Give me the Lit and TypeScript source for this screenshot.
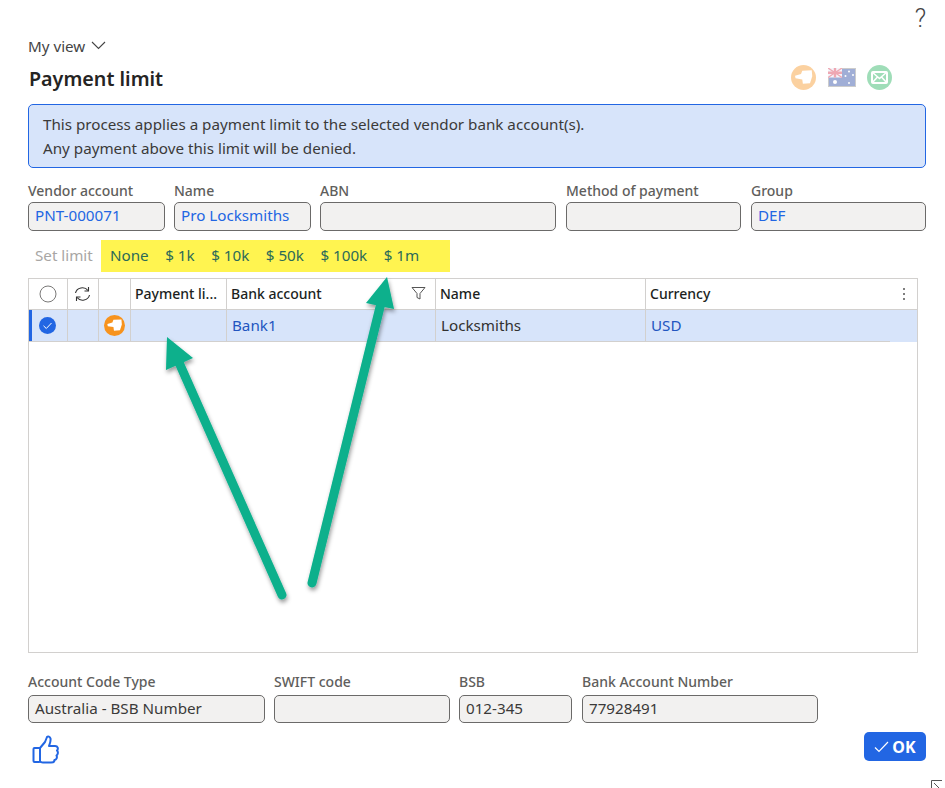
import { LitElement, html, css, svg } from 'lit';
import { customElement } from 'lit/decorators.js';

const topFields = [
  { label: 'Vendor account', value: 'PNT-000071', width: 137, gap: 0, link: true },
  { label: 'Name', value: 'Pro Locksmiths', width: 137, gap: 9, link: true },
  { label: 'ABN', value: '', width: 236, gap: 9 },
  { label: 'Method of payment', value: '', width: 175, gap: 10 },
  { label: 'Group', value: 'DEF', width: 175, gap: 10, link: true }
];

const bottomFields = [
  { label: 'Account Code Type', value: 'Australia - BSB Number', width: 237, gap: 0 },
  { label: 'SWIFT code', value: '', width: 176, gap: 9 },
  { label: 'BSB', value: '012-345', width: 113, gap: 9 },
  { label: 'Bank Account Number', value: '77928491', width: 236, gap: 10 }
];

const limits = ['None', '$ 1k', '$ 10k', '$ 50k', '$ 100k', '$ 1m'];

const handIcon = svg`
  <circle cx="10" cy="10" r="10" fill="#f7931e"></circle>
  <path d="M3.2 8.6 L8 7.2 L9 4.5 L16.6 4.2 L17 9 L15.2 14.5 L9.5 15 L9 11.5 L3.6 10.6 Z" fill="#fff"></path>`;

@customElement('app-root')
export class AppRoot extends LitElement {
  static styles = css`
    :host {
      display: block;
      position: relative;
      width: 945px;
      height: 788px;
      overflow: hidden;
      background: #fff;
      color: #323130;
      font-family: 'Noto Sans', 'Open Sans', sans-serif;
      font-size: 15.2px;
    }
    .page {
      display: flex;
      flex-direction: column;
      padding: 0 19px 0 28px;
    }
    .help {
      display: flex;
      justify-content: flex-end;
      height: 36px;
      font-family: Roboto, sans-serif;
      font-weight: 300;
      font-size: 25px;
      line-height: 37px;
      color: #444;
    }
    .view {
      display: flex;
      align-items: center;
      gap: 6px;
      height: 20px;
      color: #444;
    }
    .view svg {
      margin-bottom: 2px;
    }
    .title-row {
      display: flex;
      justify-content: space-between;
      align-items: center;
      box-sizing: border-box;
      height: 48px;
      padding-bottom: 4px;
    }
    h1 {
      margin: 0 0 0 1px;
      font-size: 19.7px;
      font-weight: 600;
      color: #252423;
    }
    .actions {
      display: flex;
      align-items: center;
      gap: 11px;
      margin-right: 34px;
      margin-bottom: 2px;
      opacity: 0.42;
    }
    .actions svg:first-child {
      margin-right: 1px;
    }
    .info {
      box-sizing: border-box;
      height: 64px;
      padding: 7px 14px;
      border: 1px solid #2266e3;
      border-radius: 5px;
      background: #d7e4fa;
      line-height: 24px;
      color: #3b3a39;
    }
    .fields {
      display: flex;
    }
    .top {
      margin-top: 14px;
    }
    .bottom {
      margin-top: 20px;
    }
    .label {
      height: 20px;
      line-height: 18px;
      font-size: 14px;
      font-weight: 500;
      color: #605e5c;
    }
    .bottom .label {
      height: 22px;
    }
    .input {
      box-sizing: border-box;
      height: 29px;
      padding: 0 6px;
      border: 1px solid #6b6a69;
      border-radius: 5px;
      background: #f2f1f0;
      line-height: 25px;
      color: #3b3a39;
      white-space: nowrap;
    }
    .bottom .input {
      height: 28px;
      line-height: 24px;
    }
    .link {
      color: #2266e3;
    }
    .limits {
      display: flex;
      align-items: center;
      margin-top: 9px;
      height: 32px;
    }
    .set {
      width: 73px;
      padding: 0 0 3px 7px;
      box-sizing: border-box;
      color: #a8a6a4;
    }
    .yellow {
      display: flex;
      align-items: center;
      gap: 16.5px;
      box-sizing: border-box;
      width: 349px;
      height: 32px;
      padding: 0 0 3px 9px;
      background: #fff450;
      color: #2c6a58;
    }
    .grid {
      box-sizing: border-box;
      width: 890px;
      height: 375px;
      margin-top: 6px;
      border: 1px solid #d2d0ce;
    }
    .row {
      display: grid;
      grid-template-columns: 39px 31px 32px 96px 209px 210px 1fr;
    }
    .row > div {
      display: flex;
      align-items: center;
      box-sizing: border-box;
      padding-left: 5px;
      border-right: 1px solid #d2d0ce;
      border-bottom: 1px solid #d2d0ce;
      min-width: 0;
    }
    .row > div:last-child {
      border-right: none;
    }
    .head > div {
      height: 31px;
      padding-left: 4px;
      padding-bottom: 1px;
      font-size: 14px;
      font-weight: 500;
      color: #201f1e;
    }
    .data > div {
      height: 32px;
      padding-bottom: 2px;
      background: #d7e4fa;
    }
    .data > div:first-child {
      box-shadow: inset 3px 0 0 #2266e3;
    }
    .data > div:last-child {
      border-bottom: none;
      background: linear-gradient(#d2d0ce, #d2d0ce) left bottom / 244px 1px no-repeat, #d7e4fa;
    }
    .row > .icon {
      justify-content: center;
      padding: 0 1px 0 0;
    }
    .row > .between {
      justify-content: space-between;
      padding-right: 9px;
    }
    .row > .between:last-child {
      padding-right: 11px;
    }
    .row .cell-link {
      color: #2255c0;
    }
    .foot {
      display: flex;
      justify-content: space-between;
      align-items: flex-start;
      margin-top: 9px;
    }
    .thumb {
      margin: 3px 0 0 4px;
    }
    .ok {
      display: flex;
      align-items: center;
      justify-content: center;
      gap: 3px;
      width: 62px;
      height: 29px;
      border: none;
      border-radius: 5px;
      background: #2266e3;
      color: #fff;
      font: 700 16px 'Noto Sans', sans-serif;
    }
    .arrows {
      position: absolute;
      inset: 0;
      pointer-events: none;
    }
    .corner {
      position: absolute;
      left: 931px;
      top: 780px;
    }
  `;

  renderField(f: { label: string; value: string; width: number; gap: number; link?: boolean }) {
    return html`
      <div style="width:${f.width}px;margin-left:${f.gap}px">
        <div class="label">${f.label}</div>
        <div class="input ${f.link ? 'link' : ''}">${f.value}</div>
      </div>
    `;
  }

  render() {
    return html`
      <div class="page">
        <div class="help">?</div>
        <div class="view">
          My view
          <svg width="15" height="9" viewBox="0 0 15 9"><path d="M1 1 L7.5 7.5 L14 1" fill="none" stroke="#444" stroke-width="1.1"></path></svg>
        </div>
        <div class="title-row">
          <h1>Payment limit</h1>
          <div class="actions">
            <svg width="25" height="25" viewBox="0 0 20 20">${handIcon}</svg>
            <svg width="28" height="19" viewBox="0 0 28 19">
              <rect width="28" height="19" fill="#1f3f9e"></rect>
              <rect x="0.5" y="0.5" width="27" height="18" fill="none" stroke="#888"></rect>
              <rect width="14" height="9.5" fill="#e8e8f4"></rect>
              <path d="M0 0 L14 9.5 M14 0 L0 9.5" stroke="#d8304a" stroke-width="1.4"></path>
              <path d="M7 0 V9.5 M0 4.75 H14" stroke="#d8304a" stroke-width="2.4"></path>
              <circle cx="7" cy="14" r="2" fill="#fff"></circle>
              <circle cx="21" cy="3.5" r="1" fill="#fff"></circle>
              <circle cx="17.5" cy="8" r="1" fill="#fff"></circle>
              <circle cx="25" cy="7" r="1" fill="#fff"></circle>
              <circle cx="21" cy="15" r="1" fill="#fff"></circle>
            </svg>
            <svg width="25" height="25" viewBox="0 0 25 25">
              <circle cx="12.5" cy="12.5" r="12.5" fill="#1db058"></circle>
              <rect x="5" y="7" width="15" height="11" rx="1" fill="none" stroke="#fff" stroke-width="2"></rect>
              <path d="M5 7 L12.5 13.5 L20 7 M5 18 L10.5 12 M20 18 L14.5 12" fill="none" stroke="#fff" stroke-width="1.6"></path>
            </svg>
          </div>
        </div>
        <div class="info">
          This process applies a payment limit to the selected vendor bank account(s).<br />
          Any payment above this limit will be denied.
        </div>
        <div class="fields top">${topFields.map((f) => this.renderField(f))}</div>
        <div class="limits">
          <div class="set">Set limit</div>
          <div class="yellow">${limits.map((l) => html`<span>${l}</span>`)}</div>
        </div>
        <div class="grid">
          <div class="row head">
            <div class="icon">
              <svg width="18" height="18" viewBox="0 0 18 18"><circle cx="9" cy="9" r="8" fill="none" stroke="#7a7978" stroke-width="1"></circle></svg>
            </div>
            <div class="icon">
              <svg width="17" height="16" viewBox="0 0 17 16">
                <path d="M1.5 7 A7 6.5 0 0 1 14 4.5 M15.5 9 A7 6.5 0 0 1 3 11.5" fill="none" stroke="#333" stroke-width="1.1"></path>
                <path d="M14.5 1 V5 H10.5 M2.5 15 V11 H6.5" fill="none" stroke="#333" stroke-width="1.1"></path>
              </svg>
            </div>
            <div></div>
            <div>Payment li...</div>
            <div class="between">
              Bank account
              <svg width="15" height="15" viewBox="0 0 15 15"><path d="M1 1.5 H14 L9 7.5 V13 L6 11.5 V7.5 Z" fill="none" stroke="#555" stroke-width="1"></path></svg>
            </div>
            <div>Name</div>
            <div class="between">
              Currency
              <svg width="4" height="14" viewBox="0 0 4 14"><circle cx="2" cy="2" r="1" fill="#555"></circle><circle cx="2" cy="7" r="1" fill="#555"></circle><circle cx="2" cy="12" r="1" fill="#555"></circle></svg>
            </div>
          </div>
          <div class="row data">
            <div class="icon">
              <svg width="17" height="17" viewBox="0 0 17 17">
                <circle cx="8.5" cy="8.5" r="8.5" fill="#2266e3"></circle>
                <path d="M4.5 8.8 L7.3 11.5 L12.5 6" fill="none" stroke="#fff" stroke-width="1"></path>
              </svg>
            </div>
            <div></div>
            <div class="icon"><svg width="21" height="21" viewBox="0 0 20 20">${handIcon}</svg></div>
            <div></div>
            <div class="cell-link">Bank1</div>
            <div>Locksmiths</div>
            <div class="cell-link">USD</div>
          </div>
        </div>
        <div class="fields bottom">${bottomFields.map((f) => this.renderField(f))}</div>
        <div class="foot">
          <svg class="thumb" width="27" height="29" viewBox="0 0 27 29">
            <path d="M8 13 L13 7 L15 2 C16 1 18 1.5 18.5 3.5 C19 6 18 8 17 11 H23 C26 11 26.5 14 25 15.5 C26.5 17 26 19.5 24.5 20.5 C25.5 22.5 24.5 24.5 22.5 25 C22.5 27 21 27.5 19 27.5 H11 C9.5 27.5 9 27 8 26.5 Z" fill="none" stroke="#2266e3" stroke-width="2" stroke-linejoin="round"></path>
            <rect x="1.5" y="13" width="6.5" height="14" rx="1" fill="none" stroke="#2266e3" stroke-width="2"></rect>
          </svg>
          <button class="ok">
            <svg width="15" height="12" viewBox="0 0 15 12"><path d="M1 6.5 L5 10.5 L14 1" fill="none" stroke="#fff" stroke-width="1.2"></path></svg>
            OK
          </button>
        </div>
      </div>
      <svg class="arrows" width="945" height="788" viewBox="0 0 945 788">
        <defs>
          <filter id="shadow" x="-20%" y="-10%" width="150%" height="120%">
            <feDropShadow dx="1" dy="3" stdDeviation="2" flood-color="#000" flood-opacity="0.4"></feDropShadow>
          </filter>
        </defs>
        <g filter="url(#shadow)" fill="#08b08c" stroke="#08b08c">
          <path d="M282 595 L177 358" fill="none" stroke-width="9" stroke-linecap="round"></path>
          <path d="M167 337 L193 358 L166 370 Z" stroke="none"></path>
          <path d="M312 583 L381 303" fill="none" stroke-width="9" stroke-linecap="round"></path>
          <path d="M387 277 L394 309 L366 303 Z" stroke="none"></path>
        </g>
      </svg>
      <svg class="corner" width="14" height="8" viewBox="0 0 14 8">
        <path d="M0.5 8 V0.5 H11 M3 3 L8 8" fill="none" stroke="#555" stroke-width="1"></path>
      </svg>
    `;
  }
}
